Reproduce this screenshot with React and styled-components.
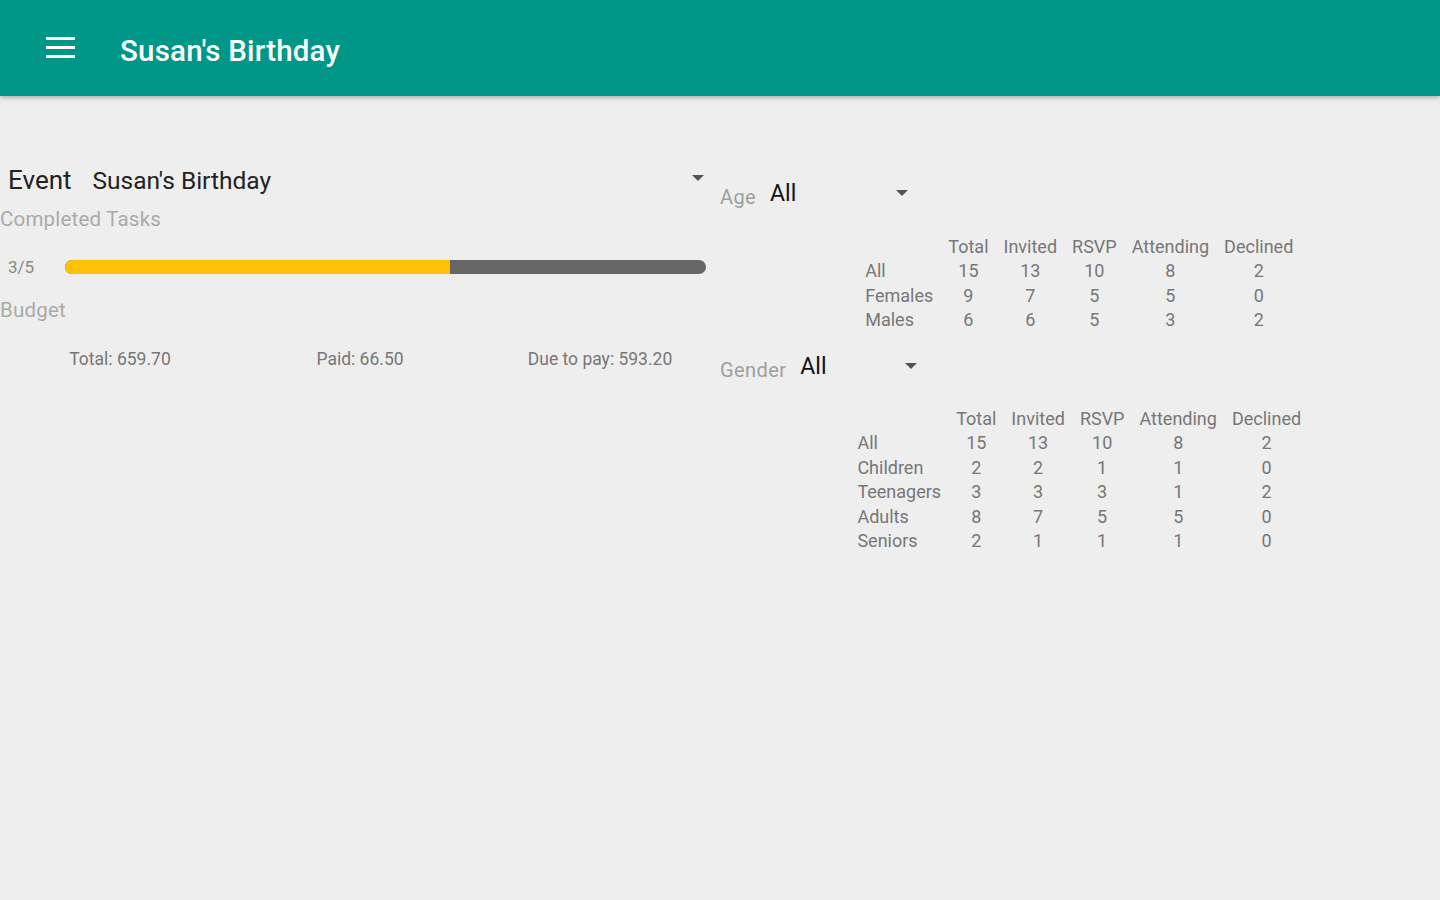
import React from 'react';
import styled, { createGlobalStyle } from 'styled-components';

const GlobalStyle = createGlobalStyle`
  html, body {
    margin: 0;
    padding: 0;
    background: #eeeeee;
    font-family: Roboto, "Noto Sans", Arial, sans-serif;
  }
`;

const Page = styled.div`
  width: 1440px;
  height: 900px;
  background: #eeeeee;
  overflow: hidden;
`;

const AppBar = styled.header`
  height: 96px;
  background: #009688;
  display: flex;
  align-items: center;
  box-shadow: 0 2px 4px rgba(0, 0, 0, 0.25);
  position: relative;
  z-index: 1;
`;

const MenuButton = styled.div`
  width: 29px;
  margin-left: 46px;
  display: flex;
  flex-direction: column;
  gap: 6px;
  margin-top: -2px;
`;

const MenuLine = styled.span`
  display: block;
  height: 3px;
  background: #ffffff;
`;

const Title = styled.h1`
  margin: 5px 0 0 45px;
  color: #ffffff;
  font-size: 29.5px;
  font-weight: 500;
  letter-spacing: 0.2px;
`;

const Content = styled.main`
  display: flex;
`;

const LeftColumn = styled.section`
  width: 720px;
  padding-right: 14px;
  box-sizing: border-box;
`;

const RightColumn = styled.section`
  width: 720px;
  display: flex;
  flex-direction: column;
`;

const EventRow = styled.div`
  margin-top: 66px;
  height: 36px;
  display: flex;
  align-items: center;
  padding-left: 8px;
`;

const EventLabel = styled.span`
  font-size: 26px;
  color: #222;
`;

const EventValue = styled.span`
  font-size: 24.5px;
  color: #222;
  margin-left: 21px;
  flex: 1;
`;

const Arrow = styled.span`
  width: 0;
  height: 0;
  border-left: 6px solid transparent;
  border-right: 6px solid transparent;
  border-top: 6px solid #555;
  margin-right: ${({ $right }) => $right || 0}px;
  margin-top: ${({ $up }) => ($up ? -4 : 0)}px;
`;

const SectionLabel = styled.div`
  font-size: 20.5px;
  color: #aaaaaa;
  height: ${({ $h }) => $h}px;
  line-height: ${({ $h }) => $h}px;
  letter-spacing: 0.2px;
`;

const ProgressRow = styled.div`
  height: 54px;
  display: flex;
  align-items: center;
  padding-left: 8px;
`;

const ProgressText = styled.span`
  font-size: 17px;
  color: #888;
  width: 57px;
`;

const Track = styled.div`
  flex: 1;
  height: 14px;
  border-radius: 7px;
  background: #666666;
  overflow: hidden;
`;

const Fill = styled.div`
  height: 100%;
  background: #ffc107;
`;

const BudgetRow = styled.div`
  margin-right: -14px;
  margin-top: 18px;
  display: grid;
  grid-template-columns: repeat(3, 1fr);
  height: 30px;
  align-items: center;
`;

const BudgetItem = styled.span`
  text-align: center;
  font-size: 17.5px;
  color: #777;
`;

const FilterRow = styled.div`
  height: 34px;
  margin-top: ${({ $top }) => $top}px;
  display: flex;
  align-items: center;
`;

const FilterLabel = styled.span`
  font-size: 20px;
  color: #9e9e9e;
  margin-top: 7px;
  letter-spacing: 0.4px;
`;

const FilterValue = styled.span`
  font-size: 23px;
  color: #111;
  margin-left: 14px;
  width: ${({ $w }) => $w}px;
`;

const StatsTable = styled.table`
  border-collapse: collapse;
  align-self: center;
  margin-top: ${({ $top }) => $top}px;
  margin-left: 6px;
  font-size: 18px;
  color: #777;

  th {
    font-weight: 400;
    padding: 0 7.5px;
    height: 24.5px;
    text-align: center;
  }
  td {
    padding: 0 7.5px;
    height: 24.5px;
    text-align: center;
  }
  td:first-child {
    text-align: left;
    padding-left: 0;
  }
`;

const columns = ['Total', 'Invited', 'RSVP', 'Attending', 'Declined'];

const genderStats = [
  ['All', 15, 13, 10, 8, 2],
  ['Females', 9, 7, 5, 5, 0],
  ['Males', 6, 6, 5, 3, 2],
];

const ageStats = [
  ['All', 15, 13, 10, 8, 2],
  ['Children', 2, 2, 1, 1, 0],
  ['Teenagers', 3, 3, 3, 1, 2],
  ['Adults', 8, 7, 5, 5, 0],
  ['Seniors', 2, 1, 1, 1, 0],
];

const Stats = ({ rows, top }) => (
  <StatsTable $top={top}>
    <thead>
      <tr>
        <th />
        {columns.map((c) => (
          <th key={c}>{c}</th>
        ))}
      </tr>
    </thead>
    <tbody>
      {rows.map((r) => (
        <tr key={r[0]}>
          {r.map((v, i) => (
            <td key={i}>{v}</td>
          ))}
        </tr>
      ))}
    </tbody>
  </StatsTable>
);

const App = () => {
  const done = 3;
  const total = 5;

  return (
    <Page>
      <GlobalStyle />
      <AppBar>
        <MenuButton>
          <MenuLine />
          <MenuLine />
          <MenuLine />
        </MenuButton>
        <Title>Susan's Birthday</Title>
      </AppBar>
      <Content>
        <LeftColumn>
          <EventRow>
            <EventLabel>Event</EventLabel>
            <EventValue>Susan's Birthday</EventValue>
            <Arrow $right={2} $up />
          </EventRow>
          <SectionLabel $h={42}>Completed Tasks</SectionLabel>
          <ProgressRow>
            <ProgressText>{done}/{total}</ProgressText>
            <Track>
              <Fill style={{ width: `${(done / total) * 100}%` }} />
            </Track>
          </ProgressRow>
          <SectionLabel $h={32}>Budget</SectionLabel>
          <BudgetRow>
            <BudgetItem>Total: 659.70</BudgetItem>
            <BudgetItem>Paid: 66.50</BudgetItem>
            <BudgetItem>Due to pay: 593.20</BudgetItem>
          </BudgetRow>
        </LeftColumn>
        <RightColumn>
          <FilterRow $top={80}>
            <FilterLabel>Age</FilterLabel>
            <FilterValue $w={126}>All</FilterValue>
            <Arrow />
          </FilterRow>
          <Stats rows={genderStats} top={24} />
          <FilterRow $top={17}>
            <FilterLabel>Gender</FilterLabel>
            <FilterValue $w={105}>All</FilterValue>
            <Arrow />
          </FilterRow>
          <Stats rows={ageStats} top={23} />
        </RightColumn>
      </Content>
    </Page>
  );
};

export default App;
